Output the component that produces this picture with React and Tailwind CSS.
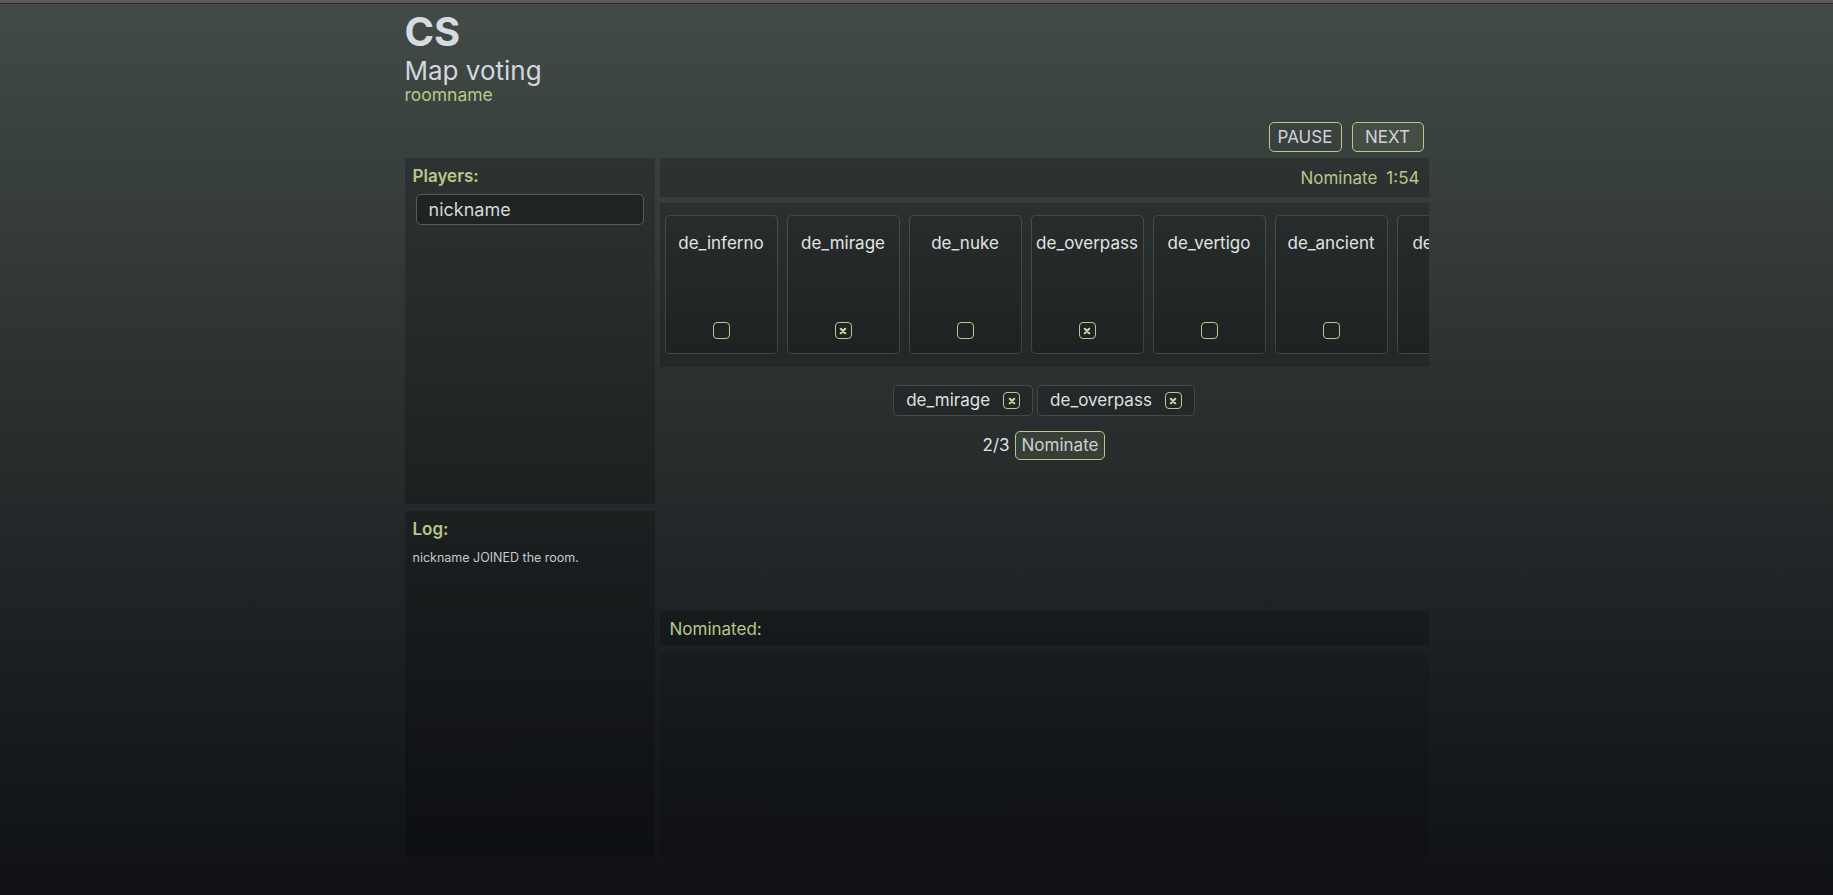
import React, { useState } from 'react';

const maps = ['de_inferno', 'de_mirage', 'de_nuke', 'de_overpass', 'de_vertigo', 'de_ancient', 'de_anubis'];

function XMark() {
  return (
    <svg width="8" height="8" viewBox="0 0 8 8">
      <path d="M1.8 1.8 L6.2 6.2 M6.2 1.8 L1.8 6.2" stroke="#c9d79b" strokeWidth="2.2" strokeLinecap="round" />
    </svg>
  );
}

function Check({ checked }) {
  return (
    <div className="w-[17px] h-[17px] rounded-[4px] border border-[#b9c98b] flex items-center justify-center">
      {checked && <XMark />}
    </div>
  );
}

export default function App() {
  const [picked, setPicked] = useState(['de_mirage', 'de_overpass']);

  const toggle = (m) => {
    setPicked(picked.includes(m) ? picked.filter((p) => p !== m) : [...picked, m]);
  };

  return (
    <div className="min-h-screen bg-linear-to-b from-[#424b48] to-[#0f1115] font-['Inter',sans-serif] text-[#dde2e1]">
      <div className="h-[3px] bg-[#5c5c5c]" />
      <div className="h-px bg-[#2d2d2d]" />

      <div className="w-[1024px] mx-auto pt-[4px]">
        {/* header */}
        <div className="text-[40px] leading-[48px] font-bold text-[#d6dbe2]">CS</div>
        <div className="text-[26px] leading-[29px] text-[#d2d7de]">Map voting</div>
        <div className="text-[17.5px] leading-[20px] text-[#b7c78a]">roomname</div>

        <div className="flex justify-end gap-[10px] pr-[5px] mt-[17px]">
          <button className="w-[73px] h-[30px] pt-[1px] rounded-[5px] border border-[#b9c98b] text-[17px] text-[#cdd3dc]">
            PAUSE
          </button>
          <button className="w-[72px] h-[30px] pt-[1px] rounded-[5px] border border-[#b9c98b] bg-[#454e45] text-[17px] text-[#cdd3dc]">
            NEXT
          </button>
        </div>

        <div className="flex gap-[5px] mt-[6px] h-[699px]">
          {/* left column */}
          <div className="w-[250px] flex flex-col gap-[7px]">
            <div className="flex-1 bg-black/20 px-[8px] pt-[8px]">
              <div className="text-[17px] leading-[20px] font-semibold text-[#b7c78a]">Players:</div>
              <div className="mt-[8px] mx-[3px] h-[31px] rounded-[5px] border border-[#565e5c] bg-[#1e2423] pl-[12px] flex items-center text-[18px] text-[#d4d9d8]">
                nickname
              </div>
            </div>
            <div className="flex-1 bg-black/20 px-[8px] pt-[8px]">
              <div className="text-[17px] leading-[20px] font-semibold text-[#b7c78a]">Log:</div>
              <div className="mt-[10px] text-[12.5px] text-[#c3c9c8]">nickname JOINED the room.</div>
            </div>
          </div>

          {/* right column */}
          <div className="flex-1 flex flex-col min-w-0">
            <div className="h-[39px] shrink-0 bg-black/20 flex items-center justify-end gap-[9px] pr-[9px] pt-[2px] text-[17px] text-[#b7c78a]">
              <span>Nominate</span>
              <span>1:54</span>
            </div>

            <div className="mt-[6px] h-[164px] shrink-0 bg-black/20 flex gap-[9px] pl-[5px] pt-[12px] overflow-hidden">
              {maps.map((m) => (
                <div
                  key={m}
                  onClick={() => toggle(m)}
                  className="w-[113px] h-[139px] shrink-0 rounded-[5px] border border-white/15 bg-linear-to-b from-black/5 to-black/15 flex flex-col items-center justify-between pt-[17px] pb-[14px] cursor-pointer"
                >
                  <div className="text-[17px] leading-[20px] text-[#e0e4e3] whitespace-nowrap">{m}</div>
                  <Check checked={picked.includes(m)} />
                </div>
              ))}
            </div>

            <div className="flex justify-center gap-[4px] mt-[18px]">
              {picked.map((m) => (
                <div
                  key={m}
                  className="h-[31px] rounded-[5px] border border-white/15 bg-black/15 flex items-center gap-[13px] px-[12px] pt-[1px] text-[17px] text-[#dde2e1]"
                >
                  <span>{m}</span>
                  <button onClick={() => toggle(m)} className="-mt-[1px]">
                    <Check checked />
                  </button>
                </div>
              ))}
            </div>

            <div className="flex justify-center items-center gap-[5px] mt-[15px]">
              <span className="text-[17px] text-[#dde2e1] pt-[1px]">{picked.length}/3</span>
              <button className="h-[29px] px-[6px] pt-[1px] rounded-[5px] border border-[#b9c98b] bg-[#383f37] text-[17px] text-[#cbd1d0]">
                Nominate
              </button>
            </div>

            <div className="mt-auto">
              <div className="h-[34px] bg-black/20 flex items-center pl-[10px] pt-[3px] text-[17px] text-[#b7c78a]">Nominated:</div>
              <div className="mt-[8px] h-[204px] bg-black/10" />
            </div>
          </div>
        </div>
      </div>
    </div>
  );
}
